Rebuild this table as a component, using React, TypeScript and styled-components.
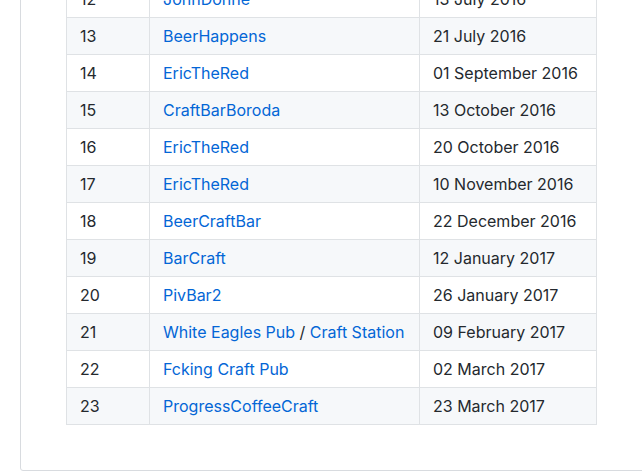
import React from "react";
import styled, { createGlobalStyle } from "styled-components";

const Global = createGlobalStyle`
  html, body {
    margin: 0;
    padding: 0;
    background: #ffffff;
    overflow: hidden;
  }
  body {
    font-family: Inter, "Liberation Sans", Arial, sans-serif;
    font-size: 16px;
    line-height: 1.5;
    color: #24292e;
  }
`;

const Page = styled.div`
  width: 642px;
  height: 475px;
  overflow: hidden;
`;

const Readme = styled.article`
  margin: -66px 0 0 20px;
  width: 700px;
  padding: 45px;
  border: 1px solid #d8dbdf;
  border-radius: 3px;
  background: #fff;
  box-sizing: border-box;
`;

const Table = styled.table`
  border-collapse: collapse;
  border-spacing: 0;
  table-layout: fixed;
  width: 531px;
`;

const Row = styled.tr<{ $striped: boolean }>`
  background: ${(p) => (p.$striped ? "#f6f8fa" : "#ffffff")};
  border-top: 1px solid #c6cbd1;
`;

const Cell = styled.td`
  padding: 6px 13px;
  border: 1px solid #dfe2e5;
  white-space: nowrap;
  overflow: hidden;
  height: 24px;
  box-sizing: content-box;
`;

const Link = styled.a`
  color: #0366d6;
  text-decoration: none;
`;

type Entry = { n: number; places: string[]; date: string };

const rows: Entry[] = [
  { n: 12, places: ["JohnDonne"], date: "13 July 2016" },
  { n: 13, places: ["BeerHappens"], date: "21 July 2016" },
  { n: 14, places: ["EricTheRed"], date: "01 September 2016" },
  { n: 15, places: ["CraftBarBoroda"], date: "13 October 2016" },
  { n: 16, places: ["EricTheRed"], date: "20 October 2016" },
  { n: 17, places: ["EricTheRed"], date: "10 November 2016" },
  { n: 18, places: ["BeerCraftBar"], date: "22 December 2016" },
  { n: 19, places: ["BarCraft"], date: "12 January 2017" },
  { n: 20, places: ["PivBar2"], date: "26 January 2017" },
  { n: 21, places: ["White Eagles Pub", "Craft Station"], date: "09 February 2017" },
  { n: 22, places: ["Fcking Craft Pub"], date: "02 March 2017" },
  { n: 23, places: ["ProgressCoffeeCraft"], date: "23 March 2017" },
];

export default function App() {
  return (
    <Page>
      <Global />
      <Readme>
        <Table>
          <colgroup>
            <col style={{ width: 83 }} />
            <col style={{ width: 270 }} />
            <col style={{ width: 177 }} />
          </colgroup>
          <tbody>
            {rows.map((r) => (
              <Row key={r.n} $striped={r.n % 2 === 1}>
                <Cell>{r.n}</Cell>
                <Cell>
                  {r.places.map((p, i) => (
                    <React.Fragment key={p}>
                      {i > 0 && " / "}
                      <Link href="#">{p}</Link>
                    </React.Fragment>
                  ))}
                </Cell>
                <Cell>{r.date}</Cell>
              </Row>
            ))}
          </tbody>
        </Table>
      </Readme>
    </Page>
  );
}
